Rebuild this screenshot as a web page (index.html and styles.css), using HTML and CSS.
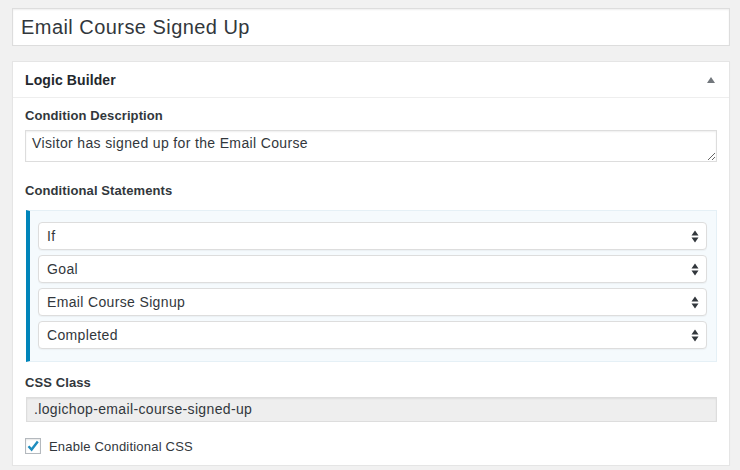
FILE: index.html
```html
<!DOCTYPE html>
<html lang="en">

<head>
    <meta charset="UTF-8">
    <title>Email Course Signed Up</title>
    <link rel="stylesheet" href="styles.css">
</head>

<body>

    <div class="title-wrap">
        <input type="text" class="title" value="Email Course Signed Up">
    </div>

    <div class="postbox">
        <div class="postbox-head">
            <h2>Logic Builder</h2>
            <svg class="toggle" width="10" height="8" viewBox="0 0 10 8"><path d="M1 7 L5 1 L9 7 Z" fill="#72777c"/></svg>
        </div>
        <div class="postbox-body">
            <label class="field-label label-desc" for="desc">Condition Description</label>
            <textarea id="desc" class="desc" rows="1">Visitor has signed up for the Email Course</textarea>

            <div class="field-label label-statements">Conditional Statements</div>
            <div class="statements">
                <div class="select">If<svg class="updown" width="8" height="13" viewBox="0 0 8 13"><path d="M0.5 5.5 L4 0.5 L7.5 5.5 Z M0.5 7.5 L4 12.5 L7.5 7.5 Z" fill="#32373c"/></svg></div>
                <div class="select">Goal<svg class="updown" width="8" height="13" viewBox="0 0 8 13"><path d="M0.5 5.5 L4 0.5 L7.5 5.5 Z M0.5 7.5 L4 12.5 L7.5 7.5 Z" fill="#32373c"/></svg></div>
                <div class="select">Email Course Signup<svg class="updown" width="8" height="13" viewBox="0 0 8 13"><path d="M0.5 5.5 L4 0.5 L7.5 5.5 Z M0.5 7.5 L4 12.5 L7.5 7.5 Z" fill="#32373c"/></svg></div>
                <div class="select">Completed<svg class="updown" width="8" height="13" viewBox="0 0 8 13"><path d="M0.5 5.5 L4 0.5 L7.5 5.5 Z M0.5 7.5 L4 12.5 L7.5 7.5 Z" fill="#32373c"/></svg></div>
            </div>

            <div class="field-label label-css">CSS Class</div>
            <div class="css-class">.logichop-email-course-signed-up</div>

            <div class="check-row">
                <span class="checkbox"><svg width="16" height="16" viewBox="0 0 16 16"><path d="M3.5 8.2 L6.6 11.6 L12.8 3.6" fill="none" stroke="#1e8cbe" stroke-width="2.4" stroke-linejoin="miter"/></svg></span>
                <span>Enable Conditional CSS</span>
            </div>
        </div>
    </div>

</body>

</html>
```

FILE: styles.css
```css
body {
    margin: 0;
    padding: 8px 10px 0 12px;
    background-color: #f1f1f1;
    font-family: "Liberation Sans", Arial, sans-serif;
    color: #23282d;
}

.title {
    display: block;
    box-sizing: border-box;
    width: 100%;
    height: 38px;
    margin: 0;
    padding: 0 8px;
    border: 1px solid #ddd;
    background-color: #fff;
    box-shadow: inset 0 1px 2px rgba(0, 0, 0, 0.07);
    font-family: inherit;
    font-size: 20px;
    letter-spacing: 0.45px;
    color: #32373c;
    outline: none;
}

.postbox {
    margin-top: 15px;
    background-color: #fff;
    border: 1px solid #e5e5e5;
    box-shadow: 0 1px 1px rgba(0, 0, 0, 0.04);
}

.postbox-head {
    display: flex;
    align-items: center;
    justify-content: space-between;
    height: 35px;
    padding: 0 13px 0 12px;
    border-bottom: 1px solid #eee;
}

.postbox-head h2 {
    margin: 0;
    font-size: 14px;
    font-weight: bold;
    letter-spacing: 0.1px;
}

.postbox-body {
    padding: 9px 12px 11px 12px;
}

.field-label {
    display: block;
    font-size: 13px;
    line-height: 18px;
    font-weight: bold;
    letter-spacing: 0.1px;
    color: #32373c;
}

.desc {
    display: block;
    box-sizing: border-box;
    width: 100%;
    height: 32px;
    margin: 5px 0 0 0;
    padding: 3px 6px;
    border: 1px solid #ddd;
    box-shadow: inset 0 1px 2px rgba(0, 0, 0, 0.07);
    font-family: inherit;
    font-size: 14px;
    line-height: 18px;
    letter-spacing: 0.35px;
    color: #32373c;
    resize: vertical;
    overflow: hidden;
    outline: none;
}

.label-statements {
    margin-top: 20px;
}

.statements {
    margin: 10px 0 0 1px;
    padding: 11px 9px 12px 8px;
    background-color: #f5fafd;
    border: 1px solid #e5f0f6;
    border-left: 4px solid #0085ba;
    display: flex;
    flex-direction: column;
    gap: 5px;
}

.select {
    display: flex;
    align-items: center;
    justify-content: space-between;
    box-sizing: border-box;
    height: 28px;
    padding: 0 7px 0 8px;
    background-color: #fff;
    border: 1px solid #ddd;
    border-radius: 4px;
    box-shadow: 0 1px 1px rgba(0, 0, 0, 0.04);
    font-size: 14px;
    letter-spacing: 0.35px;
    color: #32373c;
}

.label-css {
    margin-top: 12px;
}

.css-class {
    box-sizing: border-box;
    height: 25px;
    margin: 5px 0 0 1px;
    padding: 0 7px;
    line-height: 23px;
    background-color: #eee;
    border: 1px solid #ddd;
    box-shadow: inset 0 1px 2px rgba(0, 0, 0, 0.07);
    font-size: 14px;
    letter-spacing: 0.35px;
    color: #32373c;
}

.check-row {
    display: flex;
    align-items: center;
    gap: 8px;
    margin-top: 16px;
    font-size: 13px;
    letter-spacing: 0.2px;
    color: #32373c;
}

.checkbox {
    display: block;
    box-sizing: border-box;
    width: 16px;
    height: 16px;
    border: 1px solid #b4b9be;
    background-color: #fff;
    box-shadow: inset 0 1px 2px rgba(0, 0, 0, 0.1);
}

.checkbox svg {
    display: block;
    margin: -1px 0 0 -1px;
}
```
